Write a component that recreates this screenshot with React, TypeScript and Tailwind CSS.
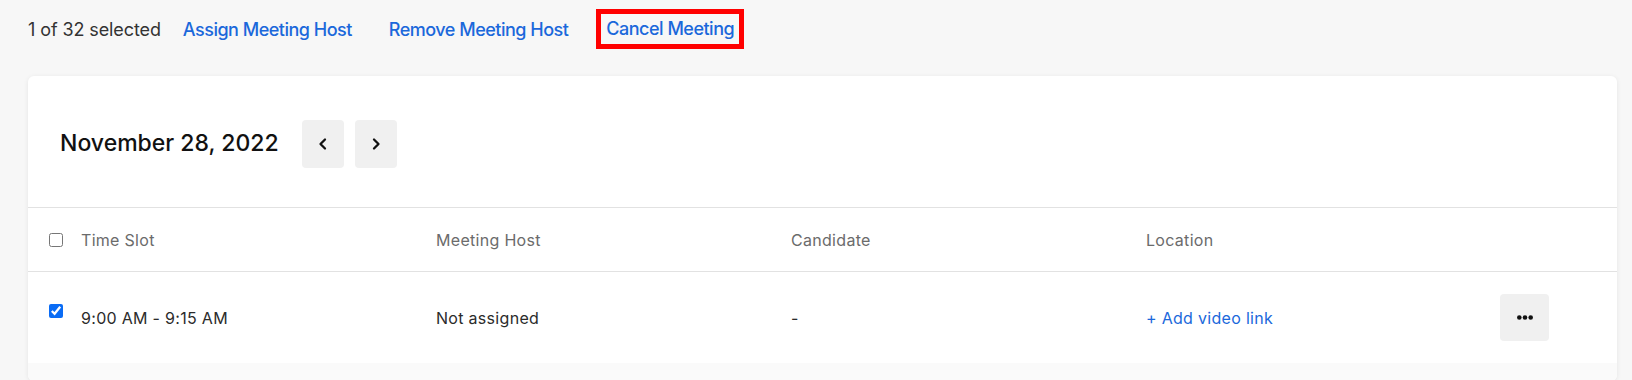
import React from "react";

const columns = ["Time Slot", "Meeting Host", "Candidate", "Location"];

function NavButton({ dir }: { dir: "prev" | "next" }) {
  return (
    <button className="w-[42px] h-[48px] rounded-[4px] bg-[#f0f0f0] flex items-center justify-center">
      <svg width="14" height="14" viewBox="0 0 14 14" fill="none">
        {dir === "prev" ? (
          <path d="M9 2.5L4.5 7L9 11.5" stroke="#111" strokeWidth="2.3" strokeLinecap="round" strokeLinejoin="round" />
        ) : (
          <path d="M5 2.5L9.5 7L5 11.5" stroke="#111" strokeWidth="2.3" strokeLinecap="round" strokeLinejoin="round" />
        )}
      </svg>
    </button>
  );
}

export default function App() {
  return (
    <div className="min-h-screen bg-[#f7f7f7] font-['Inter',sans-serif] text-[16px]">
      {/* Bulk action bar */}
      <div className="h-[58px] pl-[28px] flex items-center text-[18px]">
        <span className="text-[#333] tracking-[-0.1px]">1 of 32 selected</span>
        <button className="ml-[22px] text-[#1b68db] font-medium tracking-[-0.5px]">Assign Meeting Host</button>
        <button className="ml-[37px] text-[#1b68db] font-medium tracking-[-0.5px]">Remove Meeting Host</button>
        <button className="ml-[28px] h-[40px] px-[5px] border-[5px] border-[#ff0000] text-[#1b68db] font-medium tracking-[-0.5px] leading-none">
          Cancel Meeting
        </button>
      </div>

      {/* Schedule card */}
      <div className="mt-[18px] ml-[28px] mr-[15px] bg-white rounded-[6px] shadow-[0_1px_5px_rgba(0,0,0,0.08)] overflow-hidden">
        <div className="h-[132px] pt-[4px] px-[32px] flex items-center border-b border-[#e2e2e2]">
          <h2 className="text-[23px] font-medium text-[#111]">November 28, 2022</h2>
          <div className="ml-[23px] flex gap-[11px]">
            <NavButton dir="prev" />
            <NavButton dir="next" />
          </div>
        </div>

        {/* Header row */}
        <div className="h-[64px] pl-[21px] grid grid-cols-[32px_355px_355px_355px_354px_49px] items-center border-b border-[#e2e2e2] text-[#6b6b6b] tracking-[0.3px]">
          <input type="checkbox" className="w-[14px] h-[14px] m-0" />
          {columns.map((c) => (
            <span key={c}>{c}</span>
          ))}
          <span />
        </div>

        {/* Body row */}
        <div className="h-[91px] pl-[21px] grid grid-cols-[32px_355px_355px_355px_354px_49px] items-center text-[#2b2b2b] tracking-[0.3px]">
          <input type="checkbox" defaultChecked className="w-[14px] h-[14px] m-0 mb-[14px] accent-[#0a6cf5]" />
          <span>9:00 AM - 9:15 AM</span>
          <span>Not assigned</span>
          <span>-</span>
          <span className="text-[#1b68db]">+ Add video link</span>
          <button className="w-[49px] h-[47px] rounded-[4px] bg-[#f0f0f0] flex items-center justify-center">
            <svg width="16" height="5" viewBox="0 0 16 5" fill="#111">
              <circle cx="2.3" cy="2.5" r="2.3" />
              <circle cx="8" cy="2.5" r="2.3" />
              <circle cx="13.7" cy="2.5" r="2.3" />
            </svg>
          </button>
        </div>

        <div className="h-[18px] bg-[#fafafa]" />
      </div>
    </div>
  );
}
